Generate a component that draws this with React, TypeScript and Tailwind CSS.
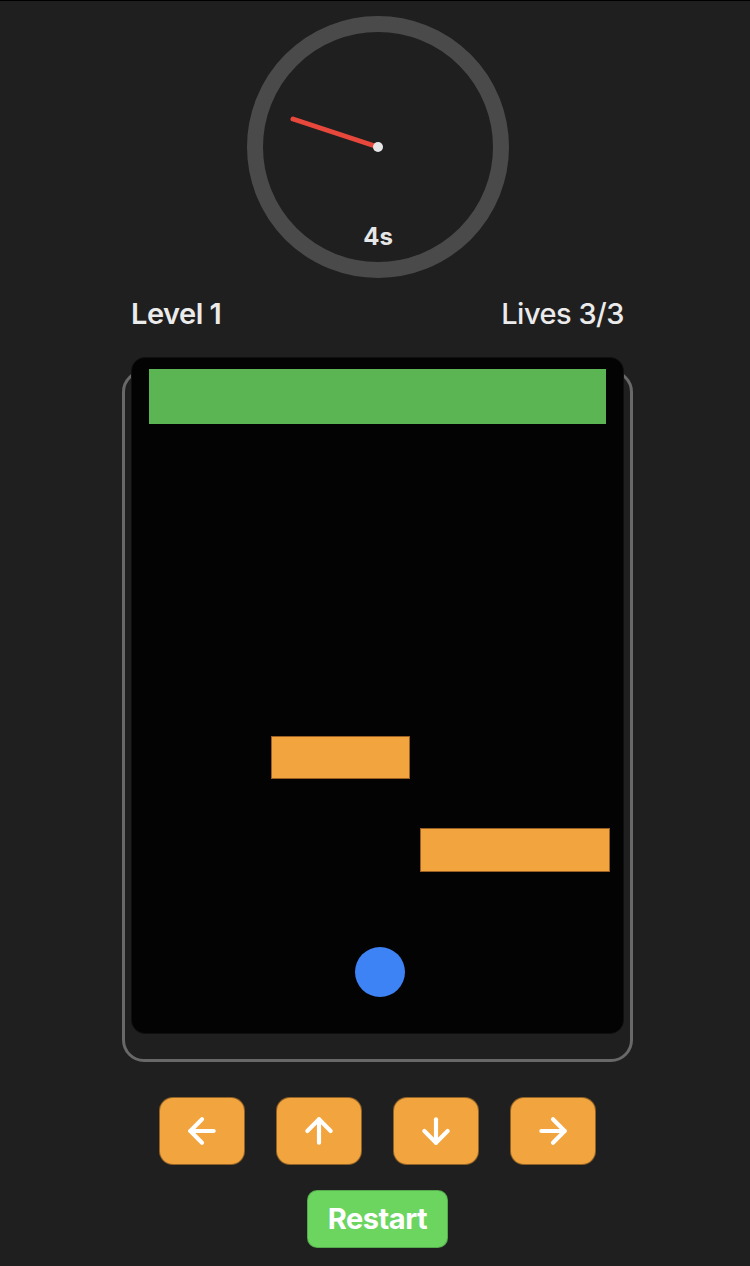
import React from "react";
import { ArrowLeft, ArrowUp, ArrowDown, ArrowRight } from "lucide-react";

const obstacles = [
  { id: 1, className: "left-[139px] top-[378px] w-[139px] h-[43px]" },
  { id: 2, className: "left-[288px] top-[470px] w-[190px] h-[44px]" },
];

const controls = [
  { key: "left", Icon: ArrowLeft },
  { key: "up", Icon: ArrowUp },
  { key: "down", Icon: ArrowDown },
  { key: "right", Icon: ArrowRight },
];

function Timer({ seconds }: { seconds: number }) {
  return (
    <svg width="262" height="262" viewBox="0 0 262 262" className="block">
      <circle cx="131" cy="131" r="123" fill="none" stroke="#4a4a4a" strokeWidth="16" />
      <line x1="131" y1="131" x2="46" y2="103" stroke="#e8483b" strokeWidth="5" strokeLinecap="round" />
      <circle cx="131" cy="131" r="5" fill="#e6e6e6" />
      <text
        x="131"
        y="229"
        textAnchor="middle"
        fill="#e6e6e6"
        fontSize="24"
        fontWeight="700"
        fontFamily="Inter, 'Liberation Sans', sans-serif"
      >
        {seconds}s
      </text>
    </svg>
  );
}

export default function App() {
  return (
    <div className="min-h-screen bg-[#1f1f1f] border-t border-black pl-[5px] flex flex-col items-center font-['Inter','Liberation_Sans',sans-serif]">
      {/* Countdown dial */}
      <div className="mt-[15px]">
        <Timer seconds={4} />
      </div>

      {/* Status row */}
      <div className="mt-[18px] h-[36px] w-[493px] flex items-center justify-between text-[29px] text-[#ebebeb] tracking-[-0.5px]">
        <span className="font-semibold">Level 1</span>
        <span className="font-medium">Lives 3/3</span>
      </div>

      {/* Game board */}
      <div className="mt-[38px] w-[511px] border-[3px] border-[#686868] rounded-[22px] px-[6px] pb-[25px]">
        <div className="relative -mt-[16px] h-[677px] bg-[#030303] border border-[#0f0f0f] rounded-[14px] overflow-hidden">
          <div className="absolute left-[17px] top-[11px] w-[457px] h-[55px] bg-[#5cb553]" />
          {obstacles.map((o) => (
            <div
              key={o.id}
              className={`absolute bg-[#f2a43e] border border-[#9a5f22] ${o.className}`}
            />
          ))}
          <div className="absolute left-[223px] top-[589px] w-[50px] h-[50px] rounded-full bg-[#3e83f5]" />
        </div>
      </div>

      {/* Direction pad */}
      <div className="mt-[35px] flex gap-[31px]">
        {controls.map(({ key, Icon }) => (
          <button
            key={key}
            className="w-[86px] h-[68px] rounded-[14px] bg-[#f2a43e] border border-black/40 flex items-center justify-center text-white"
          >
            <Icon size={40} strokeWidth={2.5} />
          </button>
        ))}
      </div>

      <button className="mt-[25px] w-[141px] h-[58px] rounded-[10px] bg-[#6bd55f] border border-black/20 text-white text-[29px] font-bold tracking-[-0.5px]">
        Restart
      </button>
    </div>
  );
}
